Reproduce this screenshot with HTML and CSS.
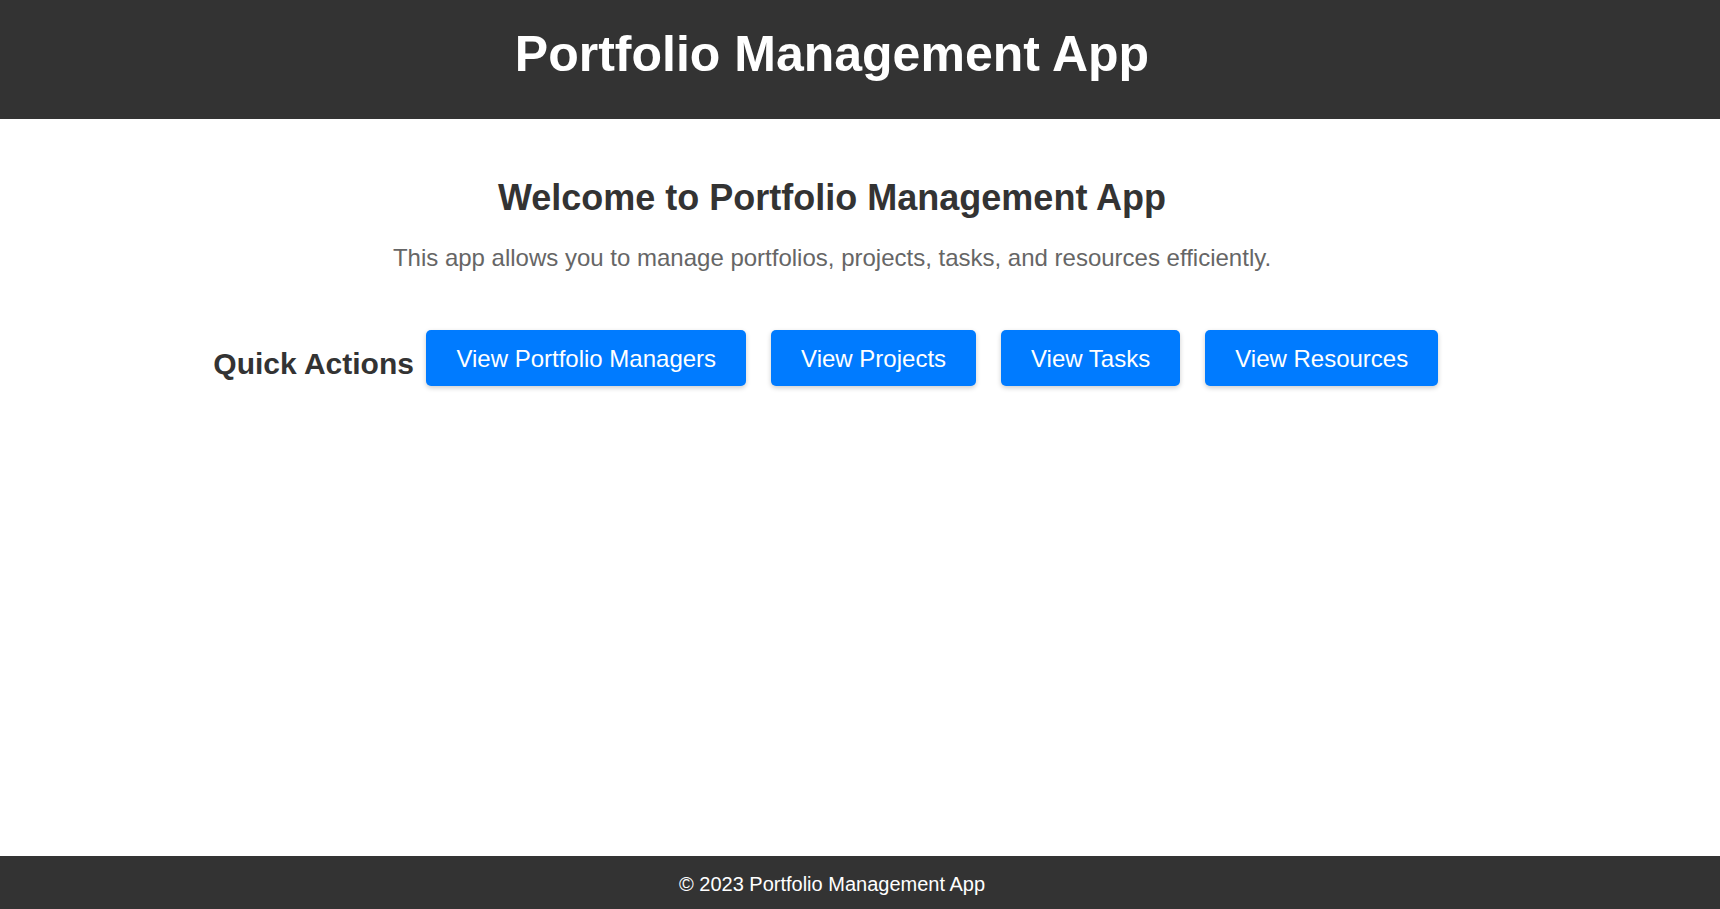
FILE: index.html
```html
<!DOCTYPE html>
<html lang="en">
<head>
<meta charset="utf-8">
<title>Portfolio Management App</title>
<link rel="stylesheet" href="styles.css">
</head>
<body>
  <header class="site-header">
    <div class="inner">
      <h1 class="site-title">Portfolio Management App</h1>
    </div>
  </header>
  <main class="main">
    <div class="inner">
      <section class="welcome">
        <h2 class="welcome-title">Welcome to Portfolio Management App</h2>
        <p class="welcome-text">This app allows you to manage portfolios, projects, tasks, and resources efficiently.</p>
      </section>
      <section class="quick-actions">
        <h2 class="qa-title">Quick Actions</h2>
        <button class="btn">View Portfolio Managers</button>
        <button class="btn">View Projects</button>
        <button class="btn">View Tasks</button>
        <button class="btn">View Resources</button>
      </section>
    </div>
  </main>
  <footer class="site-footer">
    <div class="inner">
      <p class="footer-text">&copy; 2023 Portfolio Management App</p>
    </div>
  </footer>
</body>
</html>
```
FILE: styles.css
```css
* { box-sizing: border-box; }

html, body { margin: 0; padding: 0; }

body {
  font-family: "Liberation Sans", Arial, sans-serif;
  background: #ffffff;
  color: #333333;
  min-height: 100vh;
  display: flex;
  flex-direction: column;
}

.inner {
  max-width: 1664px;
  text-align: center;
}

.site-header {
  background: #333333;
  color: #ffffff;
  padding: 26px 0 36px;
}

.site-title {
  margin: 0;
  font-size: 50px;
  line-height: 57px;
  font-weight: 700;
}

.main {
  flex: 1;
  padding-top: 58px;
}

.welcome-title {
  margin: 0;
  font-size: 36px;
  line-height: 41px;
  font-weight: 700;
  color: #333333;
}

.welcome-text {
  margin: 26px 0 0;
  font-size: 24px;
  line-height: 28px;
  color: #666666;
}

.quick-actions {
  margin-top: 58px;
  display: flex;
  justify-content: center;
  align-items: center;
}

.qa-title {
  margin: 11px 0 0;
  font-size: 30px;
  line-height: 35px;
  font-weight: 700;
  color: #333333;
}

.btn {
  margin: 0 12.5px;
  padding: 15px 30px 13px;
  font-family: "Liberation Sans", Arial, sans-serif;
  font-size: 24px;
  line-height: 28px;
  color: #ffffff;
  background: #007bff;
  border: none;
  border-radius: 5px;
  box-shadow: 0 2px 5px rgba(0, 0, 0, 0.2);
  cursor: pointer;
}

.site-footer {
  background: #333333;
  color: #ffffff;
  padding: 17px 0 13px;
}

.footer-text {
  margin: 0;
  font-size: 20px;
  line-height: 23px;
}
```
